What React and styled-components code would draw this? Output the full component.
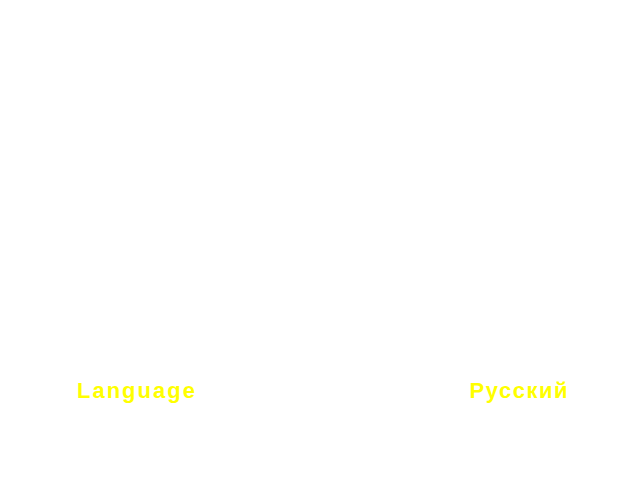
import React from "react";
import styled, { createGlobalStyle } from "styled-components";

const Global = createGlobalStyle`
  html, body {
    margin: 0;
    padding: 0;
    background: #ffffff;
  }
`;

const Screen = styled.div`
  width: 640px;
  height: 480px;
  box-sizing: border-box;
  padding-top: 378px;
  background: #ffffff;
`;

const SettingRow = styled.div`
  display: flex;
  justify-content: space-between;
  align-items: baseline;
  padding: 0 71px 0 77px;
`;

const Label = styled.span`
  font-family: "Liberation Sans", Arial, sans-serif;
  font-weight: bold;
  font-size: 22px;
  line-height: 26px;
  letter-spacing: ${(p) => (p.$tight ? "1.5px" : "2px")};
  color: #ffff00;
`;

const App = () => {
  return (
    <Screen>
      <Global />
      <SettingRow>
        <Label>Language</Label>
        <Label $tight>Русский</Label>
      </SettingRow>
    </Screen>
  );
};

export default App;
